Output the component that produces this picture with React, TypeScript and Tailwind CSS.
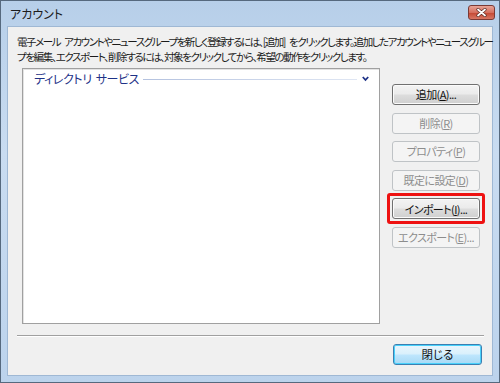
import React from "react";

const font = "font-['Meiryo_UI','Noto_Sans_CJK_JP',sans-serif] [font-feature-settings:'palt']";

function DialogButton({
  label,
  accel,
  rest = "",
  disabled = false,
}: {
  label: string;
  accel: string;
  rest?: string;
  disabled?: boolean;
}) {
  return (
    <div
      className={
        disabled
          ? "flex h-[21px] w-[88px] items-center justify-center whitespace-nowrap rounded-[3px] border border-[#bfc3c6] bg-[#f4f4f4] text-[11px] tracking-[-0.6px] text-[#8d8d8d]"
          : "flex h-[21px] w-[88px] items-center justify-center whitespace-nowrap rounded-[3px] border border-[#707070] bg-[linear-gradient(#f3f3f3_0%,#ebebeb_48%,#dddddd_52%,#cfcfcf_100%)] text-[11px] tracking-[-0.6px] text-[#111] shadow-[inset_0_0_0_1px_#fbfbfb]"
      }
    >
      <span>
        {label}(<span className="underline">{accel}</span>){rest}
      </span>
    </div>
  );
}

export default function App() {
  return (
    <div className={`flex h-[383px] w-[500px] flex-col border border-[#56697e] bg-[linear-gradient(#b7cfe9,#c9dcf1_40%,#bcd3ec)] ${font}`}>
      {/* Title bar */}
      <div className="flex h-[25px] items-center justify-between pl-[9px] pr-[4px]">
        <span className="text-[12px] text-[#1b1b1b]">アカウント</span>
        <div className="mt-[-2px] flex h-[15px] w-[27px] items-center justify-center rounded-[3px] border border-[#7a3a35] bg-[linear-gradient(#e8a497,#d56f5e_50%,#c54a35_55%,#d87764)]">
          <svg width="11" height="9" viewBox="0 0 11 9">
            <path d="M2 1.5 L9 7.5 M9 1.5 L2 7.5" stroke="#5a2a24" strokeWidth="3.2" strokeLinecap="round" />
            <path d="M2 1.5 L9 7.5 M9 1.5 L2 7.5" stroke="#fff" strokeWidth="1.8" strokeLinecap="round" />
          </svg>
        </div>
      </div>

      {/* Content */}
      <div className="mx-[6px] mb-[6px] flex flex-1 flex-col border border-[#9fb8d4] bg-[#f0f0f0] pl-[9px] pt-[7px]">
        <p className="whitespace-nowrap text-[10.5px] leading-[15px] text-[#1b1b1b]">
          <span className="tracking-[-1.45px]">
            電子メール<span className="inline-block w-[4px]" />アカウントやニュースグループを新しく登録するには、[追加]<span className="inline-block w-[4px]" />をクリックします。追加したアカウントやニュースグルー
          </span>
          <br />
          <span className="tracking-[-1.4px]">
            プを編集、エクスポート、削除するには、対象をクリックしてから、希望の動作をクリックします。
          </span>
        </p>

        <div className="mt-[4px] flex">
          {/* List */}
          <div className="ml-[5px] h-[256px] w-[358px] border border-[#a0a0a0] bg-white shadow-[inset_1px_1px_0_#e3e3e3]">
            <div className="flex items-center pl-[11px] pr-[10px] pt-[1px]">
              <span className="whitespace-nowrap text-[12px] tracking-[-0.4px] text-[#1e3287]">
                ディレクトリ<span className="inline-block w-[4px]" />サービス
              </span>
              <div className="ml-[4px] h-px flex-1 bg-[linear-gradient(90deg,#b4c2df,#dfe6f3)]" />
              <svg className="ml-[5px]" width="7" height="6" viewBox="0 0 7 6">
                <path d="M0.8 1 L3.5 4 L6.2 1" fill="none" stroke="#1e3287" strokeWidth="1.8" />
              </svg>
            </div>
          </div>

          {/* Buttons */}
          <div className="ml-[12px] mt-[16px] flex flex-col gap-[7.6px]">
            <DialogButton label="追加" accel="A" rest="..." />
            <DialogButton label="削除" accel="R" disabled />
            <DialogButton label="プロパティ" accel="P" disabled />
            <DialogButton label="既定に設定" accel="D" disabled />
            <div className="m-[-5px] rounded-[3px] border-[3px] border-[#ee1111] p-[2px]">
              <DialogButton label="インポート" accel="I" rest="..." />
            </div>
            <DialogButton label="エクスポート" accel="E" rest="..." disabled />
          </div>
        </div>

        {/* Separator */}
        <div className="mr-[8px] mt-[11px] h-[2px] border-b border-t border-b-white border-t-[#a0a0a0]" />

        <div className="mr-[10px] mt-[7px] flex justify-end">
          <div className="flex h-[21px] w-[89px] items-center justify-center rounded-[3px] border border-[#3c7fb1] bg-[linear-gradient(#eaf6fd_0%,#d9f0fc_48%,#bee6fd_52%,#a7d9f5_100%)] text-[11.5px] text-[#111] shadow-[inset_0_0_0_1px_#48d1fb]">
            閉じる
          </div>
        </div>
      </div>
    </div>
  );
}
